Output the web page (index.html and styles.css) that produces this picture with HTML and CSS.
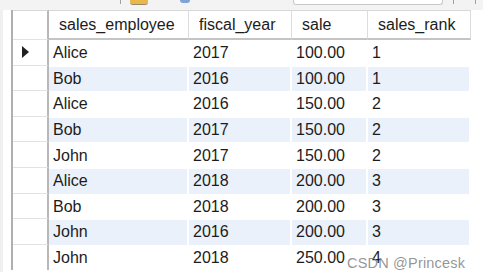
FILE: index.html
```html
<!DOCTYPE html>
<html lang="en">
<head>
    <meta charset="UTF-8">
    <title>Result Grid</title>
    <link rel="stylesheet" href="styles.css">
</head>
<body>
    <div class="toolbar">
        <span class="tb-sep tb-sep-first"></span>
        <span class="tb-icon tb-yellow"></span>
        <span class="tb-icon tb-blue"></span>
        <span class="tb-input"></span>
        <span class="tb-sep"></span>
        <span class="tb-sep tb-sep-last"></span>
    </div>
    <div class="main">
        <div class="gutter"></div>
        <div class="grid">
            <div class="hcell ind"></div>
            <div class="hcell">sales_employee</div>
            <div class="hcell">fiscal_year</div>
            <div class="hcell">sale</div>
            <div class="hcell">sales_rank</div>

            <div class="ind"><span class="arrow"></span></div>
            <div class="cell">Alice</div><div class="cell">2017</div><div class="cell">100.00</div><div class="cell">1</div>

            <div class="ind"></div>
            <div class="cell alt">Bob</div><div class="cell alt">2016</div><div class="cell alt">100.00</div><div class="cell alt">1</div>

            <div class="ind"></div>
            <div class="cell">Alice</div><div class="cell">2016</div><div class="cell">150.00</div><div class="cell">2</div>

            <div class="ind"></div>
            <div class="cell alt">Bob</div><div class="cell alt">2017</div><div class="cell alt">150.00</div><div class="cell alt">2</div>

            <div class="ind"></div>
            <div class="cell">John</div><div class="cell">2017</div><div class="cell">150.00</div><div class="cell">2</div>

            <div class="ind"></div>
            <div class="cell alt">Alice</div><div class="cell alt">2018</div><div class="cell alt">200.00</div><div class="cell alt">3</div>

            <div class="ind"></div>
            <div class="cell">Bob</div><div class="cell">2018</div><div class="cell">200.00</div><div class="cell">3</div>

            <div class="ind"></div>
            <div class="cell alt">John</div><div class="cell alt">2016</div><div class="cell alt">200.00</div><div class="cell alt">3</div>

            <div class="ind last"></div>
            <div class="cell">John</div><div class="cell">2018</div><div class="cell">250.00</div><div class="cell">4</div>
        </div>
    </div>
    <div class="watermark">CSDN @Princesk</div>
</body>
</html>
```

FILE: styles.css
```css
body {
    margin: 0;
    width: 483px;
    height: 279px;
    background: #fff;
    font-family: "Liberation Sans", Arial, sans-serif;
    font-size: 16px;
    color: #1c1c1c;
    position: relative;
    overflow: hidden;
}

/* cut-off toolbar at the very top */
.toolbar {
    height: 10px;
    background: #f3f3f3;
    display: flex;
    align-items: flex-start;
    overflow: hidden;
}

.tb-sep {
    width: 1px;
    height: 4px;
    background: #a0a0a0;
    margin-left: 10px;
}

.tb-sep-first { margin-left: 120px; }
.tb-sep-last { margin-left: 21px; }

.tb-icon {
    height: 4px;
    border-radius: 0 0 3px 3px;
}

.tb-yellow {
    width: 18px;
    margin-left: 9px;
    background: #e8b84a;
    border-bottom: 1px solid #9a8a6a;
}

.tb-blue {
    width: 10px;
    margin-left: 32px;
    height: 3px;
    background: #7fa3d6;
}

.tb-input {
    width: 148px;
    height: 4px;
    margin-left: 103px;
    background: #fff;
    border: 1px solid #c8c8c8;
    border-top: none;
    border-radius: 0 0 3px 3px;
}

.main {
    display: flex;
}

.gutter {
    width: 11px;
    height: 262px;
    background: linear-gradient(to right, #f0f0f0 0 3px, #fff 3px);
}

.grid {
    display: grid;
    grid-template-columns: 36px 140px 103px 76px 103px;
    grid-template-rows: 30px repeat(9, 25.6px);
    border-left: 2px solid #b0b0b0;
    align-self: flex-start;
}

.hcell {
    border-top: 1px solid #d8d8d8;
    border-bottom: 2px solid #c4c4c4;
    border-right: 1px solid #dcdcdc;
    padding-left: 10px;
    display: flex;
    align-items: center;
}

.hcell:last-child {
    border-right: 2px solid #c4c4c4;
}

.ind {
    border-right: 2px solid #b8b8b8;
    border-bottom: 1px solid #e2e2e2;
    display: flex;
    align-items: center;
    padding-left: 9px;
}

.hcell.ind {
    padding-left: 0;
    border-right: 2px solid #b8b8b8;
}

.ind.last {
    border-bottom: none;
}

.arrow {
    width: 0;
    height: 0;
    border-top: 6px solid transparent;
    border-bottom: 6px solid transparent;
    border-left: 7px solid #222;
}

.cell {
    display: flex;
    align-items: center;
    padding-left: 4px;
    border-right: 2px solid #fff;
    border-top: 1px solid #fff;
}

.cell.alt {
    background: #eaf1fb;
}

.watermark {
    position: absolute;
    left: 347px;
    top: 255px;
    font-size: 14.5px;
    color: rgba(130, 130, 130, 0.85);
    letter-spacing: 0.2px;
}
```
